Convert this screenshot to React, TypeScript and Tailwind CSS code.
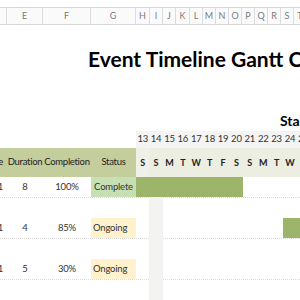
const COLS = [
  { label: "", cls: "w-[7px]" },
  { label: "E", cls: "w-[36px]" },
  { label: "F", cls: "w-[48px]" },
  { label: "G", cls: "w-[45px]" },
  { label: "H", cls: "w-[14px]" },
  { label: "I", cls: "w-[13px]" },
  { label: "J", cls: "w-[13px]" },
  { label: "K", cls: "w-[14px]" },
  { label: "L", cls: "w-[13px]" },
  { label: "M", cls: "w-[13px]" },
  { label: "N", cls: "w-[13px]" },
  { label: "O", cls: "w-[13px]" },
  { label: "P", cls: "w-[13px]" },
  { label: "Q", cls: "w-[13px]" },
  { label: "R", cls: "w-[13px]" },
  { label: "S", cls: "w-[13px]" },
  { label: "T", cls: "w-[13px]" },
];

const DAYS = [
  [13, "S"], [14, "S"], [15, "M"], [16, "T"], [17, "W"], [18, "T"], [19, "F"],
  [20, "S"], [21, "S"], [22, "M"], [23, "T"], [24, "W"], [25, "T"],
] as const;

type Task = {
  start: string;
  duration: number;
  completion: string;
  status: "Complete" | "Ongoing";
  from: number; // index into DAYS
};

const TASKS: Task[] = [
  { start: "1", duration: 8, completion: "100%", status: "Complete", from: 0 },
  { start: "1", duration: 4, completion: "85%", status: "Ongoing", from: 11 },
  { start: "1", duration: 5, completion: "30%", status: "Ongoing", from: 16 },
];

function TaskRow({ task }: { task: Task }) {
  const complete = task.status === "Complete";
  return (
    <div className="flex flex-col">
      <div className="flex h-[20px] text-[9.5px] tracking-[-0.2px] text-[#333]">
        {/* start date column, mostly scrolled out of view */}
        <div className="w-[7px] shrink-0 flex justify-end items-center whitespace-nowrap pr-[4px]">
          {task.start}
        </div>
        <div className="w-[36px] shrink-0 flex justify-center items-center">{task.duration}</div>
        <div className="w-[48px] shrink-0 flex justify-center items-center">{task.completion}</div>
        <div
          className={
            complete
              ? "w-[45px] shrink-0 flex justify-center items-center whitespace-nowrap overflow-hidden bg-[#c6e0b4]"
              : "w-[45px] shrink-0 flex items-center pl-[2px] bg-[#fff2cc]"
          }
        >
          {task.status}
        </div>
        <div className="flex shrink-0">
          {DAYS.map(([n], i) => {
            const on = i >= task.from && i < task.from + task.duration;
            return (
              <div
                key={n}
                className={
                  on
                    ? "w-[13.4px] shrink-0 bg-[#9cb56b]"
                    : i === 1
                      ? "w-[13.4px] shrink-0 bg-[#f3f4f1]"
                      : "w-[13.4px] shrink-0"
                }
              />
            );
          })}
        </div>
      </div>
      <div className="flex h-[21px]">
        <div className="w-[149.4px] shrink-0 border-t border-dotted border-[#dcdcdc]" />
        <div className="w-[13.4px] shrink-0 bg-[#f3f4f1]" />
        <div className="flex-1 border-t border-dotted border-[#dcdcdc]" />
      </div>
    </div>
  );
}

export default function App() {
  return (
    <div className="w-[300px] h-[300px] overflow-hidden bg-white font-['Lato','Liberation_Sans',sans-serif]">
      {/* spreadsheet column letters */}
      <div className="mt-[7px] h-[18px] flex border-y border-[#d6d6d6] bg-[#fafafa] text-[9px] text-[#7a7a7a]">
        {COLS.map((c) => (
          <div
            key={c.label || "D"}
            className={`${c.cls} shrink-0 flex items-center justify-center border-r border-[#dcdcdc]`}
          >
            {c.label}
          </div>
        ))}
      </div>

      {/* title */}
      <div className="h-[106px] whitespace-nowrap">
        <div className="pt-[23px] pl-[88px] text-[21px] leading-[21px] font-bold text-black">
          Event Timeline Gantt Chart
        </div>
        <div className="mt-[45px] pl-[280px] text-[14px] leading-[14px] font-bold text-black">
          Start Date
        </div>
      </div>

      {/* day numbers */}
      <div className="h-[17px] flex pl-[136px]">
        {DAYS.map(([n]) => (
          <div
            key={n}
            className="w-[13.4px] shrink-0 flex items-center justify-center bg-[#f4f4f4] text-[9.5px] tracking-[-0.2px] text-[#333]"
          >
            {n}
          </div>
        ))}
      </div>

      {/* table header */}
      <div className="h-[29px] flex text-[9.5px] tracking-[-0.3px] text-[#222]">
        <div className="w-[136px] shrink-0 flex bg-[#c4cd9c]">
          <div className="w-[7px] shrink-0 flex justify-end items-center whitespace-nowrap pr-[4px]">
            Date
          </div>
          <div className="w-[36px] shrink-0 flex justify-center items-center whitespace-nowrap">
            Duration
          </div>
          <div className="w-[48px] shrink-0 flex justify-center items-center whitespace-nowrap">
            Completion
          </div>
          <div className="w-[45px] shrink-0 flex justify-center items-center">Status</div>
        </div>
        <div className="flex shrink-0 bg-[#ebeee1] font-bold text-[9px] tracking-normal">
          {DAYS.map(([n, d], i) => (
            <div
              key={n}
              className={
                i === 0
                  ? "w-[13.4px] shrink-0 flex items-center justify-center bg-[#eff1e8]"
                  : "w-[13.4px] shrink-0 flex items-center justify-center"
              }
            >
              {d}
            </div>
          ))}
        </div>
      </div>

      {TASKS.map((t, i) => (
        <TaskRow key={i} task={t} />
      ))}
    </div>
  );
}
